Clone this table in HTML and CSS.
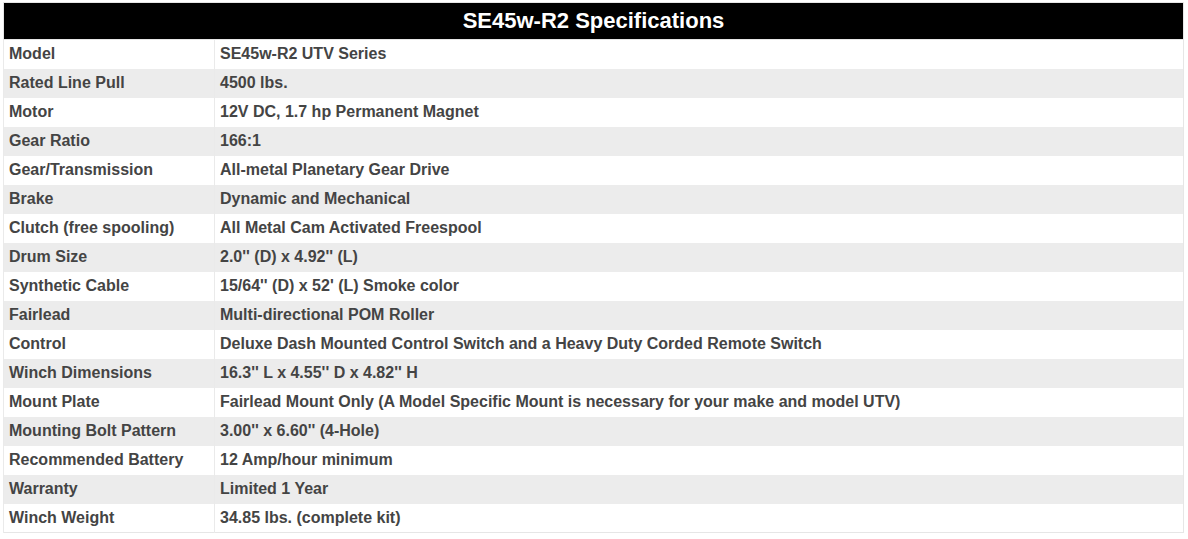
FILE: index.html
```html
<!DOCTYPE html>
<html>
<head>
<meta charset="utf-8">
<link rel="stylesheet" href="styles.css">
</head>
<body>
<table class="spec">
<colgroup><col class="c1"><col class="c2"></colgroup>
<thead><tr><th colspan="2">SE45w-R2 Specifications</th></tr></thead>
<tbody>
<tr><td>Model</td><td>SE45w-R2 UTV Series</td></tr>
<tr><td>Rated Line Pull</td><td>4500 lbs.</td></tr>
<tr><td>Motor</td><td>12V DC, 1.7 hp Permanent Magnet</td></tr>
<tr><td>Gear Ratio</td><td>166:1</td></tr>
<tr><td>Gear/Transmission</td><td>All-metal Planetary Gear Drive</td></tr>
<tr><td>Brake</td><td>Dynamic and Mechanical</td></tr>
<tr><td>Clutch (free spooling)</td><td>All Metal Cam Activated Freespool</td></tr>
<tr><td>Drum Size</td><td>2.0'' (D) x 4.92'' (L)</td></tr>
<tr><td>Synthetic Cable</td><td>15/64'' (D) x 52' (L) Smoke color</td></tr>
<tr><td>Fairlead</td><td>Multi-directional POM Roller</td></tr>
<tr><td>Control</td><td>Deluxe Dash Mounted Control Switch and a Heavy Duty Corded Remote Switch</td></tr>
<tr><td>Winch Dimensions</td><td>16.3'' L x 4.55'' D x 4.82'' H</td></tr>
<tr><td>Mount Plate</td><td>Fairlead Mount Only (A Model Specific Mount is necessary for your make and model UTV)</td></tr>
<tr><td>Mounting Bolt Pattern</td><td>3.00'' x 6.60'' (4-Hole)</td></tr>
<tr><td>Recommended Battery</td><td>12 Amp/hour minimum</td></tr>
<tr><td>Warranty</td><td>Limited 1 Year</td></tr>
<tr><td>Winch Weight</td><td>34.85 lbs. (complete kit)</td></tr>
</tbody>
</table>
</body>
</html>
```
FILE: styles.css
```css
html, body {
  margin: 0;
  padding: 0;
  background: #fff;
}
body {
  padding: 2px 5px 0 3px;
  font-family: "Liberation Sans", Arial, sans-serif;
}
.spec {
  width: 1181px;
  border-collapse: collapse;
  border: 1px solid #e6e6e6;
  table-layout: fixed;
}
.c1 { width: 211px; }
.spec th {
  background: #000;
  color: #fff;
  font-size: 22px;
  line-height: 24px;
  font-weight: bold;
  height: 36px;
  padding: 0;
  text-align: center;
  vertical-align: middle;
  border-bottom: 1px solid #e6e6e6;
}
.spec td {
  height: 29px;
  padding: 0 0 0 5px;
  box-sizing: border-box;
  font-size: 16px;
  line-height: 18px;
  font-weight: bold;
  color: #444;
  vertical-align: middle;
  border-left: 1px solid #eaeaea;
  white-space: nowrap;
}
.spec tbody tr:nth-child(even) td {
  background: #ececec;
}
```
